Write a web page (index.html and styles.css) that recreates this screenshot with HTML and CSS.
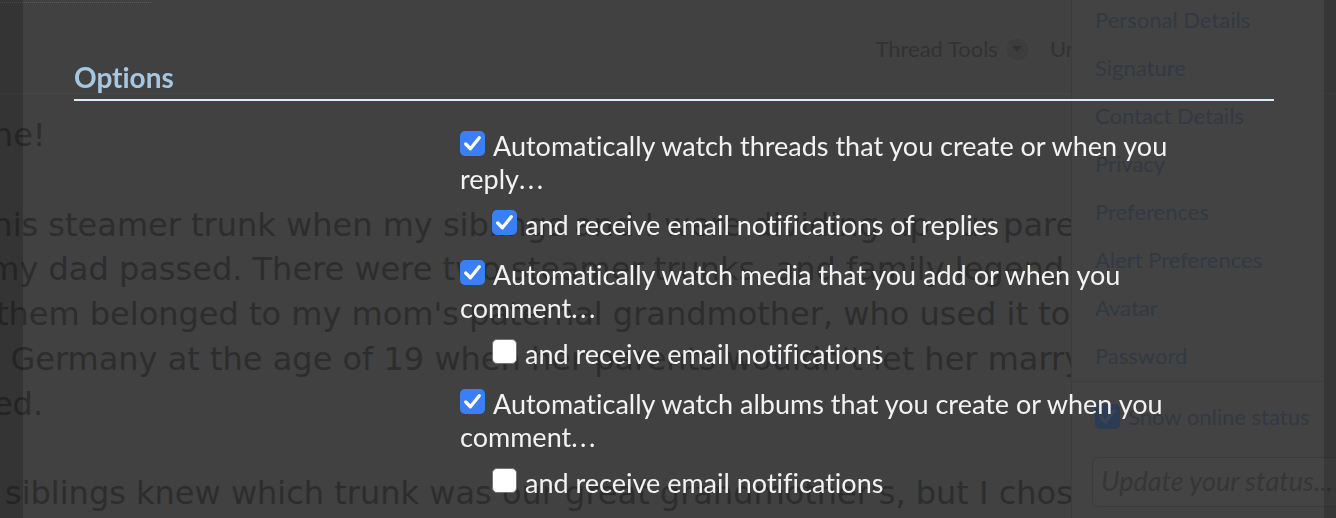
FILE: index.html
```html
<!DOCTYPE html>
<html lang="en">
<head>
  <meta charset="UTF-8">
  <meta name="viewport" content="width=device-width, initial-scale=1.0">
  <title>Thread - Options</title>
  <link rel="stylesheet" href="styles.css">
</head>
<body>
  <div class="page">
    <main class="thread">
      <div class="stamp"><span>Yesterday at 8:15 AM</span></div>

      <div class="toolbar">
        <span class="tool">Thread Tools
          <span class="caret">
            <svg width="10" height="6" viewBox="0 0 10 6"><path d="M0 0h10L5 6z" fill="#313131"/></svg>
          </span>
        </span>
        <span class="tool">Unwatch Thread</span>
      </div>

      <p class="message">Hey everyone!<br>
        <br>
        Well, I got this steamer trunk when my siblings and I were dividing up our parents'<br>
        stuff, after my dad passed. There were two steamer trunks, and family legend said<br>
        that one of them belonged to my mom's paternal grandmother, who used it to<br>
        depart from Germany at the age of 19 when her parents wouldn't let her marry him,<br>
        so she moved.<br>
        <br>
        None of my siblings knew which trunk was our great grandmother's, but I chose this one
      </p>
    </main>

    <aside class="account-menu">
      <ul class="menu-links">
        <li>Personal Details</li>
        <li>Signature</li>
        <li>Contact Details</li>
        <li>Privacy</li>
        <li>Preferences</li>
        <li>Alert Preferences</li>
        <li>Avatar</li>
        <li>Password</li>
      </ul>
      <div class="menu-footer">
        <label class="online">
          <span class="box dim">
            <svg width="25" height="25" viewBox="0 0 24 24"><path d="M5.5 12.5L10 17l8.5-10.5" fill="none" stroke="#3a4456" stroke-width="3.2" stroke-linecap="round" stroke-linejoin="round"/></svg>
          </span>Show online status
        </label>
        <div class="status-input">Update your status...</div>
      </div>
    </aside>

    <div class="gutter left"></div>
    <div class="gutter right"></div>
  </div>

  <div class="overlay">
    <div class="modal">
      <h2 class="modal-title">Options</h2>
      <dl class="ctrl-unit">
        <dt></dt>
        <dd>
          <ul class="options">
            <li>
              <label><span class="box on"><svg width="25" height="25" viewBox="0 0 24 24"><path d="M5.5 12.5L10 17l8.5-10.5" fill="none" stroke="#fff" stroke-width="3.2" stroke-linecap="round" stroke-linejoin="round"/></svg></span>Automatically watch threads that you create or when you reply<span class="dots">...</span></label>
              <ul class="sub">
                <li><label><span class="box on"><svg width="25" height="25" viewBox="0 0 24 24"><path d="M5.5 12.5L10 17l8.5-10.5" fill="none" stroke="#fff" stroke-width="3.2" stroke-linecap="round" stroke-linejoin="round"/></svg></span>and receive email notifications of replies</label></li>
              </ul>
            </li>
            <li>
              <label><span class="box on"><svg width="25" height="25" viewBox="0 0 24 24"><path d="M5.5 12.5L10 17l8.5-10.5" fill="none" stroke="#fff" stroke-width="3.2" stroke-linecap="round" stroke-linejoin="round"/></svg></span>Automatically watch media that you add or when you comment<span class="dots">...</span></label>
              <ul class="sub">
                <li><label><span class="box"></span>and receive email notifications</label></li>
              </ul>
            </li>
            <li>
              <label><span class="box on"><svg width="25" height="25" viewBox="0 0 24 24"><path d="M5.5 12.5L10 17l8.5-10.5" fill="none" stroke="#fff" stroke-width="3.2" stroke-linecap="round" stroke-linejoin="round"/></svg></span>Automatically watch albums that you create or when you comment<span class="dots">...</span></label>
              <ul class="sub">
                <li><label><span class="box"></span>and receive email notifications</label></li>
              </ul>
            </li>
          </ul>
        </dd>
      </dl>
    </div>
  </div>
</body>
</html>
```

FILE: styles.css
```css
* {
  box-sizing: border-box;
}
body {
  margin: 0;
  overflow: hidden;
  background: #414141;
  font-family: 'Lato', 'Liberation Sans', sans-serif;
  font-variant-ligatures: none;
}

/* page behind the dialog (already dimmed) */
.page {
  position: relative;
  height: 100vh;
  overflow: hidden;
  background: #414141;
}
.stamp {
  margin-top: -16px;
  font-size: 16px;
  line-height: 18px;
  color: #474747;
}
.stamp span {
  border-bottom: 1px dotted #5c5c5c;
}
.toolbar {
  display: flex;
  justify-content: flex-end;
  gap: 20px;
  margin-top: 32px;
  padding-right: 127px;
  font-size: 22px;
  line-height: 30px;
  color: #323232;
}
.tool {
  display: flex;
  align-items: center;
  gap: 7px;
}
.caret {
  display: flex;
  align-items: center;
  justify-content: center;
  width: 25px;
  height: 25px;
  border-radius: 50%;
  background: #3d3d3d;
  border: 1px solid #454545;
}
.message {
  margin: 29px 0 0 -190px;
  padding-top: 19px;
  border-top: 1px solid #474747;
  font-family: 'DejaVu Sans', sans-serif;
  font-size: 32px;
  line-height: 44.8px;
  color: #2d2d2d;
  white-space: nowrap;
}

/* account popup on the right */
.account-menu {
  position: absolute;
  top: -4px;
  right: 12px;
  bottom: 0;
  width: 253px;
  background: #434343;
  border-left: 1px solid #3c3c3c;
}
.menu-links {
  list-style: none;
  margin: 0;
  padding: 0 0 0 23px;
  font-size: 22px;
  line-height: 48px;
  color: #323943;
}
.menu-footer {
  margin-top: 1px;
  padding: 20px 0 0 23px;
  border-top: 1px solid #3d3d3d;
}
.online {
  display: block;
  font-size: 22px;
  line-height: 30px;
  color: #323943;
}
.status-input {
  width: 260px;
  height: 50px;
  margin: 25px 0 0 -3px;
  padding-left: 8px;
  border: 1px solid #3b3b3b;
  border-radius: 6px;
  background: #444;
  font-size: 27px;
  font-style: italic;
  line-height: 46px;
  color: #363636;
  white-space: nowrap;
  overflow: hidden;
}
.gutter {
  position: absolute;
  top: 0;
  bottom: 0;
  background: rgba(0, 0, 0, 0.2);
}
.gutter.left {
  left: 0;
  width: 23px;
}
.gutter.right {
  right: 0;
  width: 12px;
  background: rgba(0, 0, 0, 0.16);
}

/* dialog */
.overlay {
  position: fixed;
  inset: 0;
}
.modal {
  width: 1200px;
  margin-left: 74px;
  padding-top: 60px;
}
.modal-title {
  margin: 0;
  padding-bottom: 5px;
  border-bottom: 2px solid #d8ecfa;
  font-size: 28px;
  font-weight: 700;
  line-height: 34px;
  color: #a6c7e2;
}
.ctrl-unit {
  display: grid;
  grid-template-columns: 386px 750px;
  margin: 28px 0 0;
}
.ctrl-unit dd {
  margin: 0;
}
.options, .sub {
  list-style: none;
  margin: 0;
  padding: 0;
}
.options > li + li {
  margin-top: 17px;
}
.sub {
  padding: 13px 0 0 32px;
}
.options label {
  font-size: 27px;
  line-height: 33px;
  color: #f2f2f2;
}
.dots {
  letter-spacing: 2.5px;
}
.box {
  display: inline-block;
  width: 25px;
  height: 25px;
  margin-right: 8px;
  overflow: hidden;
  vertical-align: 0;
  border-radius: 5px;
  background: #fff;
  border: 1.5px solid #757575;
}
.box svg {
  display: block;
  margin: -1.5px;
}
.box.on {
  background: #3a7ff6;
  border: none;
}
.box.on svg {
  margin: 0;
}
.box.dim {
  background: #2d3c55;
  border: none;
  vertical-align: -4px;
}
.box.dim svg {
  margin: 0;
}
```
